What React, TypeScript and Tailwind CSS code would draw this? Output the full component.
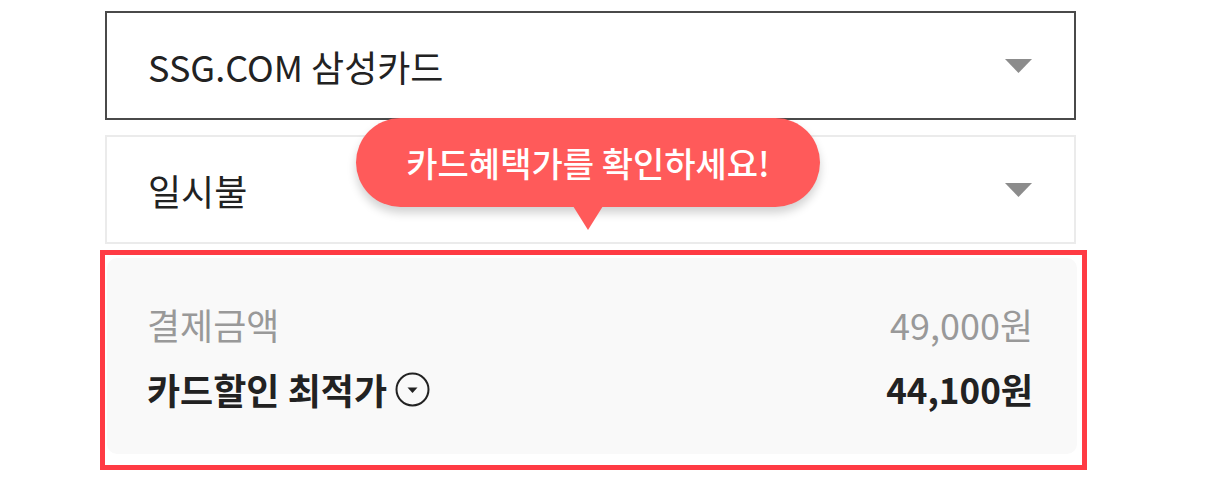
import React from "react";

function Caret() {
  return (
    <svg width="27" height="14" viewBox="0 0 27 14" className="shrink-0">
      <path d="M0 0 H27 L13.5 14 Z" fill="#8c8c8c" />
    </svg>
  );
}

function CircleDown() {
  return (
    <svg width="35" height="35" viewBox="0 0 35 35" className="shrink-0">
      <circle cx="17.5" cy="17.5" r="16" fill="none" stroke="#222" strokeWidth="2" />
      <path d="M12.5 15.5 H22.5 L17.5 21 Z" fill="#222" />
    </svg>
  );
}

export default function App() {
  const font = { fontFamily: '"Noto Sans CJK KR", "Noto Sans", sans-serif' };

  return (
    <div className="w-[1218px] h-[483px] bg-white pt-[11px]" style={font}>
      <div className="relative ml-[100px] w-[987px]">
        <div className="ml-[5px] w-[971px] h-[109px] border-2 border-[#4a4a4a] flex items-center justify-between pl-[41px] pr-[42px]">
          <span className="text-[36px] text-[#222]">SSG.COM 삼성카드</span>
          <Caret />
        </div>

        <div className="ml-[5px] mt-[15px] w-[971px] h-[109px] border-2 border-[#ebebeb] flex items-center justify-between pl-[41px] pr-[42px]">
          <span className="text-[36px] text-[#222]">일시불</span>
          <Caret />
        </div>

        <div className="absolute left-[256px] top-[107px] w-[464px] h-[89px] rounded-full bg-[#ff5a5a] shadow-[0_6px_10px_rgba(0,0,0,0.18)] flex items-center justify-center">
          <span className="text-[34px] font-medium text-white">카드혜택가를 확인하세요!</span>
          <svg width="30" height="24" viewBox="0 0 30 24" className="absolute left-[217px] top-[88px]">
            <path d="M0 0 H30 L15 24 Z" fill="#ff5a5a" />
          </svg>
        </div>

        <div className="mt-[6px] h-[220px] border-[5px] border-[#ff3b44] pl-[2px] pr-[5px] pt-[3px] pb-[11px]">
          <div className="h-full rounded-[10px] bg-[#f9f9f9] pl-[40px] pr-[44px] pt-[43px] flex flex-col gap-[19px]">
            <div className="flex items-center justify-between h-[46px]">
              <span className="text-[36px] text-[#999]">결제금액</span>
              <span className="text-[36px] text-[#999]">49,000원</span>
            </div>
            <div className="flex items-center justify-between h-[46px]">
              <span className="flex items-center gap-[8px]">
                <span className="text-[36px] font-bold text-[#222]">카드할인 최적가</span>
                <CircleDown />
              </span>
              <span className="text-[35px] font-bold text-[#222]">44,100원</span>
            </div>
          </div>
        </div>
      </div>
    </div>
  );
}
